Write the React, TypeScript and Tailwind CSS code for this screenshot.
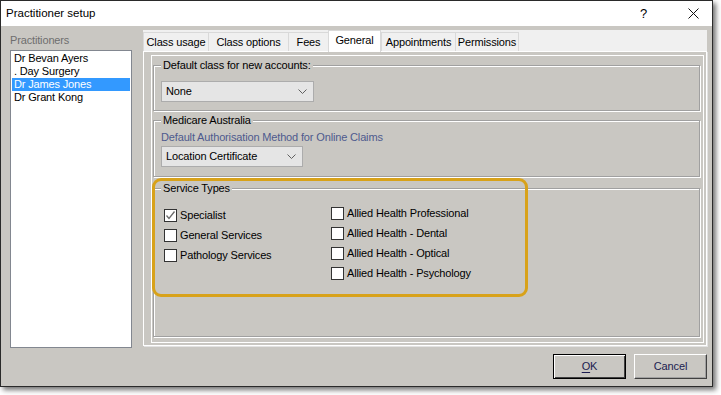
import React from "react";

const font = { fontFamily: '"Liberation Sans", Arial, sans-serif' };

function Chevron() {
  return (
    <svg width="9" height="5" viewBox="0 0 9 5" className="ml-auto mr-[6px]">
      <path d="M0.5 0.5 L4.5 4.5 L8.5 0.5" fill="none" stroke="#606060" strokeWidth="1" />
    </svg>
  );
}

function Combo({ value, width }: { value: string; width: string }) {
  return (
    <div className={`${width} h-[21px] bg-[#e5e5e5] border border-[#acacac] flex items-center pl-[4px] text-[11px] text-black`}>
      <span>{value}</span>
      <Chevron />
    </div>
  );
}

function GroupBox({ title, className, children }: { title: string; className: string; children?: React.ReactNode }) {
  return (
    <div className={`relative border border-[#a0a0a0] shadow-[inset_1px_1px_0_#fff,1px_1px_0_#fff] ${className}`}>
      <span className="absolute -top-[7px] left-[7px] bg-[#c9c7c2] px-[2px] text-[11px] leading-[13px] text-black">
        {title}
      </span>
      {children}
    </div>
  );
}

function Check({ label, checked }: { label: string; checked?: boolean }) {
  return (
    <div className="h-[20px] flex items-center gap-[3px]">
      <div className="w-[13px] h-[13px] bg-white border border-[#333] flex items-center justify-center">
        {checked && (
          <svg width="11" height="11" viewBox="0 0 11 11">
            <path d="M1.5 5.5 L4 8.5 L9.5 1.5" fill="none" stroke="#6a6a6a" strokeWidth="1.3" />
          </svg>
        )}
      </div>
      <span className="text-[11px] text-black">{label}</span>
    </div>
  );
}

const tabs = [
  { name: "Class usage", w: "w-[65px]" },
  { name: "Class options", w: "w-[80px]" },
  { name: "Fees", w: "w-[40px]" },
  { name: "General", w: "w-[53px]", active: true },
  { name: "Appointments", w: "w-[74px]" },
  { name: "Permissions", w: "w-[64px]", last: true },
];

const practitioners = ["Dr Bevan Ayers", ". Day Surgery", "Dr James Jones", "Dr Grant Kong"];

export default function App() {
  return (
    <div className="w-[721px] h-[395px] bg-white tracking-[-0.15px]" style={font}>
      <div className="w-[713px] h-[387px] border border-[#2a2a2a] bg-[#c9c7c2] flex flex-col shadow-[3px_3px_5px_rgba(0,0,0,0.55)]">
        {/* title bar */}
        <div className="h-[25px] bg-white flex items-center pl-[5px] shrink-0">
          <span className="text-[11.5px] text-black tracking-normal">Practitioner setup</span>
          <span className="ml-auto text-[13px] text-black mr-[41px]">?</span>
          <svg width="11" height="11" viewBox="0 0 11 11" className="mr-[13px]">
            <path d="M0.5 0.5 L10.5 10.5 M10.5 0.5 L0.5 10.5" stroke="#111" strokeWidth="1" />
          </svg>
        </div>

        {/* body */}
        <div className="flex-1 flex flex-col pl-[9px] pt-[4px] pr-[4px]">
          <div className="flex items-start gap-[11px]">
            {/* left column */}
            <div className="w-[122px] flex flex-col">
              <span className="mt-[4px] text-[11px] leading-[13px] text-[#6e6e6e]">Practitioners</span>
              <div className="mt-[3px] h-[298px] bg-white border border-[#828790] p-px">
                {practitioners.map((p) => (
                  <div
                    key={p}
                    className={`h-[13px] leading-[13px] pl-[2px] text-[11px] ${
                      p === "Dr James Jones" ? "bg-[#3399ff] text-white" : "text-black"
                    }`}
                  >
                    {p}
                  </div>
                ))}
              </div>
            </div>

            {/* tab control */}
            <div className="w-[564px] h-[316px] flex flex-col">
              <div className="h-[21px] bg-[#f0f0f0] flex items-end">
                {tabs.map((t) =>
                  t.active ? (
                    <div
                      key={t.name}
                      className={`${t.w} h-[22px] -mb-px relative z-10 bg-white border-t border-l border-r border-[#d9d9d9] flex items-center justify-center pb-[3px] text-[11px] text-black`}
                    >
                      {t.name}
                    </div>
                  ) : (
                    <div
                      key={t.name}
                      className={`${t.w} h-[19px] bg-[#f0f0f0] border-t border-l border-[#d9d9d9] ${
                        t.last ? "border-r" : ""
                      } flex items-center justify-center text-[11px] text-black`}
                    >
                      {t.name}
                    </div>
                  )
                )}
              </div>
              <div className="flex-1 border border-white shadow-[1px_1px_0_#e2e2e2] pl-[7px] pt-[3px] pr-[2px] pb-[2px] flex">
                <div className="flex-1 border border-white pl-px pr-[3px] flex flex-col">
                  <GroupBox title="Default class for new accounts:" className="mt-[9px] h-[46px] pt-[15px] pl-[7px]">
                    <Combo value="None" width="w-[153px]" />
                  </GroupBox>
                  <GroupBox title="Medicare Australia" className="mt-[9px] h-[57px] pt-[10px] pl-[7px]">
                    <div className="text-[11px] leading-[13px] text-[#4e5a8e]">
                      Default Authorisation Method for Online Claims
                    </div>
                    <div className="mt-[2px]">
                      <Combo value="Location Certificate" width="w-[142px]" />
                    </div>
                  </GroupBox>
                  <GroupBox title="Service Types" className="mt-[11px] h-[149px] pl-[10px] flex">
                    <div className="w-[167px] pt-[16px] flex flex-col">
                      <Check label="Specialist" checked />
                      <Check label="General Services" />
                      <Check label="Pathology Services" />
                    </div>
                    <div className="pt-[14px] flex flex-col">
                      <Check label="Allied Health Professional" />
                      <Check label="Allied Health - Dental" />
                      <Check label="Allied Health - Optical" />
                      <Check label="Allied Health - Psychology" />
                    </div>
                    <div className="absolute -left-[2px] -top-[11px] w-[376px] h-[119px] border-[3px] border-[#d8a21a] rounded-[9px] pointer-events-none" />
                  </GroupBox>
                </div>
              </div>
            </div>
          </div>

          {/* buttons */}
          <div className="mt-[6px] flex justify-end gap-[8px] pr-px">
            <button className="w-[73px] h-[25px] border border-black bg-[#c9c7c2] shadow-[inset_1px_1px_0_#fff,inset_-1px_-1px_0_#404040] text-[11px] text-[#1c1c50]">
              <span className="underline underline-offset-[2px]">O</span>K
            </button>
            <button className="w-[73px] h-[25px] border border-t-white border-l-white border-r-[#404040] border-b-[#404040] bg-[#c9c7c2] shadow-[inset_-1px_-1px_0_#a0a0a0] text-[11px] text-[#1c1c50]">
              Cancel
            </button>
          </div>
        </div>
      </div>
    </div>
  );
}
